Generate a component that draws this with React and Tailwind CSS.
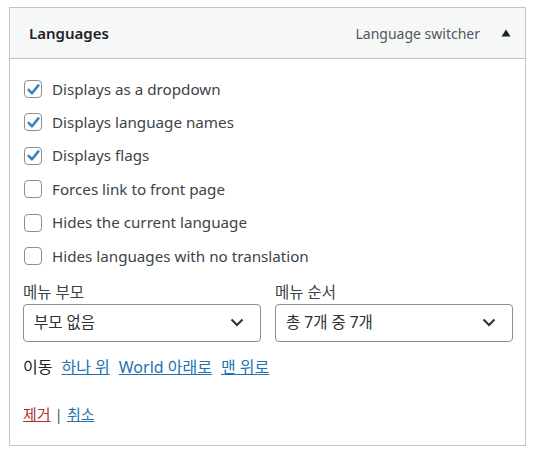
import React from "react";

const options = [
  { label: "Displays as a dropdown", checked: true },
  { label: "Displays language names", checked: true },
  { label: "Displays flags", checked: true },
  { label: "Forces link to front page", checked: false },
  { label: "Hides the current language", checked: false },
  { label: "Hides languages with no translation", checked: false },
];

const Check = ({ checked }) => (
  <span className="w-[18px] h-[18px] shrink-0 rounded-[4px] border border-[#8c8f94] bg-white flex items-center justify-center">
    {checked && (
      <svg width="15" height="15" viewBox="0 0 20 20">
        <path d="M3.5 10.5 L8 15 L16.5 4.5" fill="none" stroke="#3582c4" strokeWidth="3.4" strokeLinecap="round" strokeLinejoin="round" />
      </svg>
    )}
  </span>
);

const Chevron = () => (
  <svg width="14" height="9" viewBox="0 0 14 9">
    <path d="M1.5 1.5 L7 7 L12.5 1.5" fill="none" stroke="#2c3338" strokeWidth="2" />
  </svg>
);

const SelectBox = ({ label, value }) => (
  <div className="flex flex-col">
    <div className="text-[15.5px] leading-[20px] text-[#3c434a] h-[20px]">{label}</div>
    <div className="mt-[2px] h-[38px] rounded-[4px] border border-[#8c8f94] flex items-center justify-between pl-[10px] pr-[16px] text-[15.5px] text-[#2c3338]">
      <span>{value}</span>
      <Chevron />
    </div>
  </div>
);

export default function App() {
  return (
    <div
      className="bg-white w-[534px] h-[453px] pt-[7px] pl-[9px]"
      style={{ fontFamily: '"Noto Sans", "Noto Sans CJK KR", sans-serif' }}
    >
      <div className="w-[517px] h-[439px] border border-[#c3c4c7] bg-white">
        <div className="h-[51px] bg-[#f6f7f7] border-b border-[#c3c4c7] flex items-center pl-[19px] pr-[14px]">
          <span className="text-[15px] font-semibold text-[#1d2327]">Languages</span>
          <span className="ml-auto text-[14px] text-[#50575e]">Language switcher</span>
          <span className="ml-[21px] w-[10px] flex justify-center">
            <svg width="10" height="8" viewBox="0 0 10 8">
              <path d="M5 0.5 L9.5 7.5 L0.5 7.5 Z" fill="#1d2327" />
            </svg>
          </span>
        </div>
        <div className="px-[13px] pt-[21px]">
          <div className="flex flex-col gap-[15.4px] pl-[1px]">
            {options.map((o) => (
              <label key={o.label} className="flex items-center gap-[10px] h-[18px]">
                <Check checked={o.checked} />
                <span className="text-[15.2px] text-[#3c434a] whitespace-nowrap">{o.label}</span>
              </label>
            ))}
          </div>
          <div className="grid grid-cols-2 gap-[14px] mt-[17px] w-[490px]">
            <SelectBox label="메뉴 부모" value="부모 없음" />
            <SelectBox label="메뉴 순서" value="총 7개 중 7개" />
          </div>
          <div className="mt-[13px] flex items-center gap-[9px] text-[16px] text-[#1d2327]">
            <span>이동</span>
            <a className="text-[#2271b1] underline" href="#">하나 위</a>
            <a className="text-[#2271b1] underline" href="#">World 아래로</a>
            <a className="text-[#2271b1] underline" href="#">맨 위로</a>
          </div>
          <div className="mt-[24px] text-[15px] text-[#50575e] flex items-center gap-[4px]">
            <a className="text-[#b32d2e] underline" href="#">제거</a>
            <span>|</span>
            <a className="text-[#2271b1] underline" href="#">취소</a>
          </div>
        </div>
      </div>
    </div>
  );
}
